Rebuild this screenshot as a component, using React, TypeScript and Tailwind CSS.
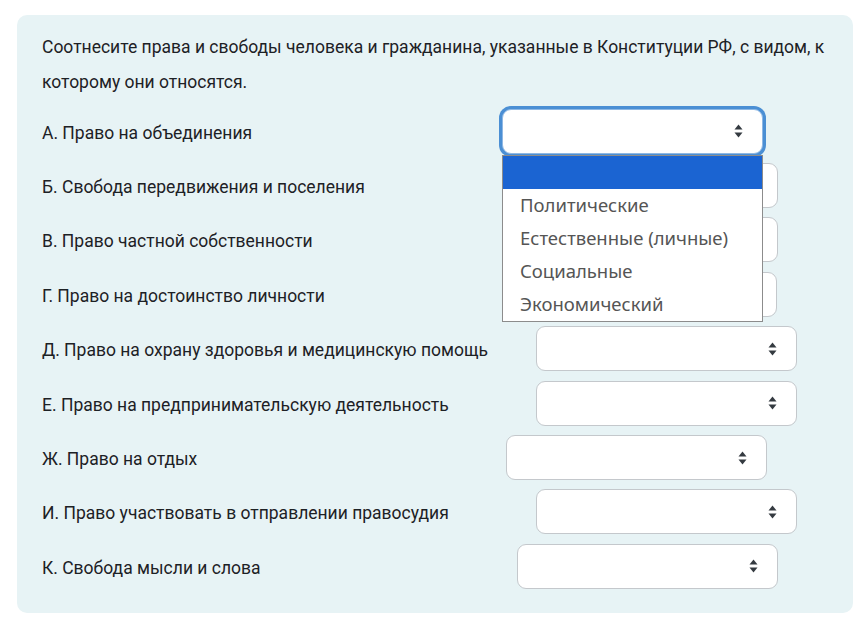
import React from "react";

const rows = [
  { label: "А. Право на объединения", ml: "ml-0", open: true },
  { label: "Б. Свобода передвижения и поселения", ml: "ml-[15px]" },
  { label: "В. Право частной собственности", ml: "ml-[15px]" },
  { label: "Г. Право на достоинство личности", ml: "ml-[14px]" },
  { label: "Д. Право на охрану здоровья и медицинскую помощь", ml: "ml-[34px]" },
  { label: "Е. Право на предпринимательскую деятельность", ml: "ml-[34px]" },
  { label: "Ж. Право на отдых", ml: "ml-[4px]" },
  { label: "И. Право участвовать в отправлении правосудия", ml: "ml-[34px]" },
  { label: "К. Свобода мысли и слова", ml: "ml-[15px]" },
];

const options = ["Политические", "Естественные (личные)", "Социальные", "Экономический"];

// стрелки селекта (вверх/вниз)
function SortArrows() {
  return (
    <svg width="9" height="14" viewBox="0 0 9 14" className="text-[#343a40]">
      <path d="M4.5 0.5 L8.5 5.5 L0.5 5.5 Z" fill="currentColor" />
      <path d="M0.5 8.5 L8.5 8.5 L4.5 13.5 Z" fill="currentColor" />
    </svg>
  );
}

function FakeSelect({ open }: { open?: boolean }) {
  return (
    <div className="relative">
      <div
        className={
          "w-[261px] h-[45px] bg-white rounded-[9px] border flex items-center justify-end pr-[19px] " +
          (open ? "border-[#8fb8e4] ring-[3px] ring-[#4b8fd4]" : "border-[#c4c8cc]")
        }
      >
        <SortArrows />
      </div>
      {open && (
        <div className="absolute left-0 top-[46px] w-[261px] bg-white border border-[#8c8c8c] z-10 font-['Noto_Sans',sans-serif] text-[18.5px] text-[#555555]">
          <div className="h-[33px] bg-[#1b64d2]" />
          {options.map((o) => (
            <div key={o} className="h-[33px] flex items-center pl-[17px]">
              {o}
            </div>
          ))}
        </div>
      )}
    </div>
  );
}

export default function App() {
  return (
    <div className="w-[857px] h-[621px] bg-white pt-[15px] pl-[17px] font-['Roboto',sans-serif]">
      <div className="w-[836px] h-[598px] bg-[#e7f3f5] rounded-[10px] pl-[25px] pr-[20px] pt-[15px]">
        <p className="text-[17.5px] leading-[35px] text-[#1d2125]">
          Соотнесите права и свободы человека и гражданина, указанные в Конституции РФ, с видом, к
          которому они относятся.
        </p>
        <div className="mt-[4px] flex flex-col">
          {rows.map((r) => (
            <div key={r.label} className="h-[54.4px] flex items-center">
              <div className="w-[460px] shrink-0 text-[17.5px] text-[#1d2125] pt-[3px]">{r.label}</div>
              <div className={r.ml}>
                <FakeSelect open={r.open} />
              </div>
            </div>
          ))}
        </div>
      </div>
    </div>
  );
}
